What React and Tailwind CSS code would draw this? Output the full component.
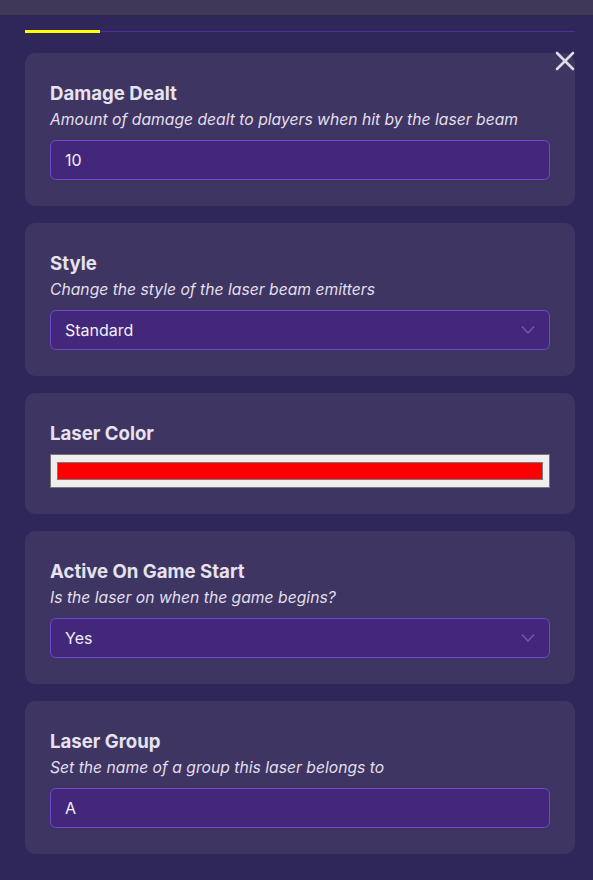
import React, { useState } from "react";

const font = { fontFamily: "Inter, 'Noto Sans', sans-serif" };

const Chevron = () => (
  <svg width="14" height="9" viewBox="0 0 14 9" className="absolute right-[14px] top-1/2 -translate-y-1/2">
    <path d="M1 1l6 6.5L13 1" fill="none" stroke="#7a5aa9" strokeWidth="1.3" />
  </svg>
);

const Card = ({ title, desc, children }) => (
  <div className="rounded-[10px] bg-[#3e3563] px-[25px] pt-[28px] pb-[26px]">
    <div className="text-[18.6px] leading-6 font-bold text-[#e6e2ee]">{title}</div>
    {desc && <div className="mt-[3px] text-[15.7px] leading-6 italic text-[#e3dfeb]">{desc}</div>}
    <div className={desc ? "mt-[8px]" : "mt-[9px]"}>{children}</div>
  </div>
);

const TextBox = ({ value }) => (
  <div className="h-[40px] rounded-[6px] border border-[#6d49cc] bg-[#43277a] px-[14px] flex items-center text-[16px] text-[#f1eef7]">
    {value}
  </div>
);

const SelectBox = ({ value }) => (
  <div className="relative h-[40px] rounded-[6px] border border-[#6d49cc] bg-[#43277a] px-[14px] flex items-center text-[16px] text-[#f1eef7]">
    {value}
    <Chevron />
  </div>
);

export default function App() {
  const [open] = useState(true);
  return (
    <div style={font} className="min-h-[880px] w-[593px] bg-[#2f2659] relative">
      <div className="h-[15px] bg-[#403859]" />
      <div className="pl-[25px] pr-[18px] pt-[15px]">
        <div className="relative h-[3px]">
          <div className="absolute left-0 right-0 top-[1px] h-px bg-[#4b3199]" />
          <div className="absolute left-0 top-0 h-[3px] w-[75px] bg-[#ffff00]" />
        </div>
      </div>
      {open && (
        <button className="absolute left-[555px] top-[51px] w-[20px] h-[20px]">
          <svg width="20" height="20" viewBox="0 0 20 20">
            <path d="M2 2l16 16M18 2L2 18" stroke="#dedbe6" strokeWidth="2.6" strokeLinecap="round" />
          </svg>
        </button>
      )}
      <div className="pl-[25px] pr-[18px] pt-[20px] pb-[26px] flex flex-col gap-[17px]">
        <Card title="Damage Dealt" desc="Amount of damage dealt to players when hit by the laser beam">
          <TextBox value="10" />
        </Card>
        <Card title="Style" desc="Change the style of the laser beam emitters">
          <SelectBox value="Standard" />
        </Card>
        <Card title="Laser Color">
          <div className="h-[34px] border border-[#767676] bg-[#efefef] px-[6px] py-[7px]">
            <div className="h-full border border-[#7a7a7a] bg-[#ff0000]" />
          </div>
        </Card>
        <Card title="Active On Game Start" desc="Is the laser on when the game begins?">
          <SelectBox value="Yes" />
        </Card>
        <Card title="Laser Group" desc="Set the name of a group this laser belongs to">
          <TextBox value="A" />
        </Card>
      </div>
    </div>
  );
}
